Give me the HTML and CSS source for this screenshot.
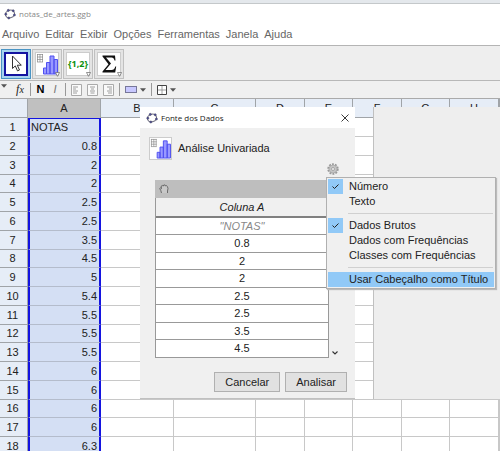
FILE: index.html
```html
<!DOCTYPE html>
<html lang="pt-BR">
<head>
<meta charset="utf-8">
<title>notas_de_artes.ggb</title>
<link rel="stylesheet" href="styles.css">
</head>
<body>
<svg class="defs" aria-hidden="true">
  <symbol id="logo" viewBox="0 0 12 12">
    <ellipse cx="6" cy="6" rx="4.6" ry="3.8" fill="none" stroke="#777788" stroke-width="1.1" transform="rotate(-20 6 6)"/>
    <g fill="#5050a0" stroke="#333344" stroke-width=".4"><circle cx="4.3" cy="2.4" r="1.1"/><circle cx="9.2" cy="2.8" r="1.1"/><circle cx="1.8" cy="6.2" r="1.1"/><circle cx="10.4" cy="7" r="1.1"/><circle cx="4.8" cy="10" r="1.1"/></g>
  </symbol>
  <symbol id="chart" viewBox="0 0 22 22">
    <path d="M1 1.500h6M1 4h6M1 6.500h6M1 9h6M1.500 1v8M4 1v8M6.500 1v8" stroke="#888888" stroke-width=".7" fill="none"/>
    <path d="M7.500 21v-6h3v6zM10.500 21V9.500h3.500V21zM14 21V3h4v18zM18 21V6.500h3.500V21z" fill="#9999ff" stroke="#5050f0" stroke-width="1"/>
  </symbol>
  <symbol id="corner" viewBox="0 0 5 5"><path d="M.5.5h4L2.500 4.300z" fill="#ffffff" stroke="#666666" stroke-width=".7"/></symbol>
  <symbol id="down" viewBox="0 0 6 4"><path d="M0 .3h6L3 3.700z" fill="#555555"/></symbol>
  <symbol id="check" viewBox="0 0 15 15"><path d="M4.500 7.500l2 2 4-4" fill="none" stroke="#222222" stroke-width="1"/></symbol>
</svg>

<div class="backdrop"></div>
<header class="titlebar"><svg class="logo"><use href="#logo"/></svg><span>notas_de_artes.ggb</span></header>
<nav class="menubar">
  <button>Arquivo</button><button>Editar</button><button>Exibir</button><button>Opções</button><button>Ferramentas</button><button>Janela</button><button>Ajuda</button>
</nav>
<div class="toolbar">
  <button class="tool active" aria-label="Mover"><svg viewBox="0 0 22 22"><path d="M7.500 3v12.500l2.800-2.600 2.200 5 2-.9-2.200-4.800h4z" fill="#ffffff" stroke="#333333" stroke-width="1"/></svg></button>
  <button class="tool" aria-label="Análise Univariada"><svg><use href="#chart"/></svg><svg class="corner"><use href="#corner"/></svg></button>
  <button class="tool list" aria-label="Lista"><span>{1,2}</span><svg class="corner"><use href="#corner"/></svg></button>
  <button class="tool" aria-label="Soma"><svg viewBox="0 0 22 22"><path d="M4.500 2.500h12.500l.5 5h-1q-.6-3-3-3H8l5 6-5.500 6.500h6q3 0 3.800-3.500h.9l-1 6H4.500v-1l6-7.200-6-7.800z" fill="#111111"/></svg><svg class="corner"><use href="#corner"/></svg></button>
</div>
<div class="stylebar">
  <svg class="down first"><use href="#down"/></svg>
  <button class="fx" aria-label="Fórmula"><i>f<small>x</small></i></button>
  <span class="sep"></span>
  <button class="bold">N</button>
  <button class="italic">I</button>
  <span class="sep"></span>
  <button aria-label="Alinhar à esquerda"><svg class="align" viewBox="0 0 11 12"><path d="M.5.5h10v11H.5z" fill="#fafafa" stroke="#aaaaaa"/><path d="M2 3h5M2 5h3M2 7h5M2 9h4" stroke="#888888" stroke-width=".8"/></svg></button>
  <button aria-label="Centralizar"><svg class="align" viewBox="0 0 11 12"><path d="M.5.5h10v11H.5z" fill="#fafafa" stroke="#aaaaaa"/><path d="M3 3h5M4 5h3M3 7h5M3.500 9h4" stroke="#888888" stroke-width=".8"/></svg></button>
  <button aria-label="Alinhar à direita"><svg class="align" viewBox="0 0 11 12"><path d="M.5.5h10v11H.5z" fill="#fafafa" stroke="#aaaaaa"/><path d="M4 3h5M6 5h3M4 7h5M5 9h4" stroke="#888888" stroke-width=".8"/></svg></button>
  <span class="sep"></span>
  <button class="pick" aria-label="Cor de fundo"><span class="swatch"></span><svg class="down"><use href="#down"/></svg></button>
  <span class="sep"></span>
  <button class="pick" aria-label="Bordas"><svg class="borders" viewBox="0 0 10 10"><path d="M.5.5h9v9h-9z" fill="#ffffff" stroke="#444444"/><path d="M5 1v8M1 5h8" stroke="#888888" stroke-width=".8"/></svg><svg class="down"><use href="#down"/></svg></button>
</div>

<main class="workspace">
  <table class="sheet">
    <colgroup><col class="c-num"><col class="c-a"><col class="c-b"><col class="c-c"><col class="c-s"><col class="c-d"><col class="c-s"><col class="c-d"><col class="c-s"><col></colgroup>
    <thead><tr><th></th><th class="sel">A</th><th>B</th><th>C</th><th>D</th><th>E</th><th>F</th><th>G</th><th>H</th><th></th></tr></thead>
    <tbody>
      <tr><th>1</th><td class="text">NOTAS</td><td></td><td></td><td></td><td></td><td></td><td></td><td></td><td></td></tr>
      <tr><th>2</th><td>0.8</td><td></td><td></td><td></td><td></td><td></td><td></td><td></td><td></td></tr>
      <tr><th>3</th><td>2</td><td></td><td></td><td></td><td></td><td></td><td></td><td></td><td></td></tr>
      <tr><th>4</th><td>2</td><td></td><td></td><td></td><td></td><td></td><td></td><td></td><td></td></tr>
      <tr><th>5</th><td>2.5</td><td></td><td></td><td></td><td></td><td></td><td></td><td></td><td></td></tr>
      <tr><th>6</th><td>2.5</td><td></td><td></td><td></td><td></td><td></td><td></td><td></td><td></td></tr>
      <tr><th>7</th><td>3.5</td><td></td><td></td><td></td><td></td><td></td><td></td><td></td><td></td></tr>
      <tr><th>8</th><td>4.5</td><td></td><td></td><td></td><td></td><td></td><td></td><td></td><td></td></tr>
      <tr><th>9</th><td>5</td><td></td><td></td><td></td><td></td><td></td><td></td><td></td><td></td></tr>
      <tr><th>10</th><td>5.4</td><td></td><td></td><td></td><td></td><td></td><td></td><td></td><td></td></tr>
      <tr><th>11</th><td>5.5</td><td></td><td></td><td></td><td></td><td></td><td></td><td></td><td></td></tr>
      <tr><th>12</th><td>5.5</td><td></td><td></td><td></td><td></td><td></td><td></td><td></td><td></td></tr>
      <tr><th>13</th><td>5.5</td><td></td><td></td><td></td><td></td><td></td><td></td><td></td><td></td></tr>
      <tr><th>14</th><td>6</td><td></td><td></td><td></td><td></td><td></td><td></td><td></td><td></td></tr>
      <tr><th>15</th><td>6</td><td></td><td></td><td></td><td></td><td></td><td></td><td></td><td></td></tr>
      <tr><th>16</th><td>6</td><td></td><td></td><td></td><td></td><td></td><td></td><td></td><td></td></tr>
      <tr><th>17</th><td>6</td><td></td><td></td><td></td><td></td><td></td><td></td><td></td><td></td></tr>
      <tr><th>18</th><td>6.3</td><td></td><td></td><td></td><td></td><td></td><td></td><td></td><td></td></tr>
    </tbody>
  </table>
  <div class="side"></div>

  <section class="dialog" role="dialog" aria-labelledby="dlg-title">
    <header class="dlg-bar"><svg class="logo"><use href="#logo"/></svg><span id="dlg-title">Fonte dos Dados</span>
      <button aria-label="Fechar"><svg viewBox="0 0 8 8"><path d="M.5.5l7 7M7.500.5l-7 7" stroke="#222222" stroke-width=".9"/></svg></button></header>
    <div class="dlg-head"><svg class="thumb"><use href="#chart"/></svg><span>Análise Univariada</span></div>
    <div class="options"><button aria-label="Opções"><svg viewBox="0 0 12 12"><circle cx="6" cy="6" r="4.800" fill="none" stroke="#999999" stroke-width="1.800" stroke-dasharray="1.900 1.100"/><circle cx="6" cy="6" r="4" fill="#c4c4c4" stroke="#a4a4a4" stroke-width=".7"/><circle cx="6" cy="6" r="1.500" fill="#eeeeee" stroke="#888888" stroke-width=".6"/></svg></button></div>
    <div class="source">
      <div class="grip"><svg viewBox="0 0 10 10"><path d="M2.500 9L1.800 6.500.7 4.500l1-.6.8.8-.3-2.500 1.200-.8.7.8.8-1.300 1.200.2.5.9 1-.4.8 1 .6 1.800L8.500 7v2" fill="#c8c8c8" stroke="#555555" stroke-width=".8"/></svg></div>
      <table class="data">
        <thead><tr><th>Coluna A</th></tr></thead>
        <tbody>
          <tr><td class="hint">"NOTAS"</td></tr><tr><td>0.8</td></tr><tr><td>2</td></tr><tr><td>2</td></tr><tr><td>2.5</td></tr><tr><td>2.5</td></tr><tr><td>3.5</td></tr><tr><td>4.5</td></tr>
        </tbody>
      </table>
      <svg class="scroll" viewBox="0 0 6 4"><path d="M.5.5L3 3 5.500.5" fill="none" stroke="#333333" stroke-width="1.100"/></svg>
    </div>
    <footer class="actions"><button>Cancelar</button><button>Analisar</button></footer>

    <ul class="popup" role="menu">
      <li><button role="menuitemcheckbox" aria-checked="true"><svg class="tick"><use href="#check"/></svg>Número</button></li>
      <li><button role="menuitemcheckbox" aria-checked="false">Texto</button></li>
      <li class="rule" role="separator"></li>
      <li><button role="menuitemradio" aria-checked="true"><svg class="tick"><use href="#check"/></svg>Dados Brutos</button></li>
      <li><button role="menuitemradio" aria-checked="false">Dados com Frequências</button></li>
      <li><button role="menuitemradio" aria-checked="false">Classes com Frequências</button></li>
      <li class="rule" role="separator"></li>
      <li><button class="hover" role="menuitem">Usar Cabeçalho como Título</button></li>
    </ul>
  </section>
</main>
</body>
</html>
```
FILE: styles.css
```css
* { box-sizing: border-box; }
html, body { height: 100%; }
body {
  margin: 0;
  display: flex;
  flex-direction: column;
  overflow: hidden;
  background: #ffffff;
  color: #222222;
  font: 11px/15px "Liberation Sans", Arial, sans-serif;
}
button {
  margin: 0;
  padding: 0;
  border: 0;
  background: none;
  color: inherit;
  font: inherit;
}
svg { display: block; }
.defs { position: absolute; width: 0; height: 0; }
.logo { width: 12px; height: 12px; }

.backdrop {
  flex: none;
  height: 4px;
  background: #e4e8ec;
  border-bottom: 1px solid #c4c8ca;
}
.titlebar {
  flex: none;
  display: flex;
  align-items: center;
  gap: 3px;
  height: 20px;
  padding: 0 4px;
  color: #888888;
  font: 8px/12px "Open Sans", "Noto Sans", sans-serif;
}
.menubar {
  flex: none;
  display: flex;
  align-items: center;
  gap: 6px;
  height: 22px;
  padding: 0 2px;
  border-bottom: 1px solid #b4b4b4;
  color: #666666;
}
.toolbar {
  flex: none;
  display: flex;
  align-items: center;
  gap: 1px;
  height: 35px;
  padding: 2px 1px 0;
  background: #eeeeee;
  border-bottom: 1px solid #b8b8b8;
}
.tool {
  position: relative;
  display: grid;
  place-items: center;
  width: 30px;
  height: 30px;
  border: 1px solid #c0c0c0;
  background: #ffffff;
  box-shadow: inset 0 0 0 2px #e4e4e4, inset 0 0 0 3px #cccccc;
}
.tool svg { width: 22px; height: 22px; }
.tool.active {
  border-color: #4a94c4;
  box-shadow: inset 0 0 0 2px #a8d4ee, inset 0 0 0 4px #1414a0;
}
.tool .corner { position: absolute; right: 1px; bottom: 1px; width: 5px; height: 5px; }
.list { color: #0a900a; font: bold 9px/12px "Open Sans", sans-serif; }

.stylebar {
  flex: none;
  display: flex;
  align-items: center;
  gap: 5px;
  height: 18px;
  padding: 0 3px;
  background: #f0f0f0;
  border-bottom: 1px solid #aaaaaa;
}
.down { width: 6px; height: 4px; }
.first { align-self: flex-start; margin: 3px 3px 0 -2px; }
.fx { width: 10px; font: 12px/15px "Liberation Serif", serif; }
.fx small { font-size: 10px; }
.sep { width: 1px; height: 13px; background: #999999; }
.bold { width: 9px; color: #000000; font-weight: bold; }
.italic { width: 10px; font-style: italic; color: #777777; }
.align { width: 11px; height: 12px; }
.pick { display: flex; align-items: center; gap: 3px; }
.swatch { width: 12px; height: 7px; border: 1px solid #777799; background: #c8c8ff; }
.borders { width: 10px; height: 10px; }

.workspace {
  flex: 1;
  min-height: 0;
  position: relative;
  overflow: hidden;
}
.sheet {
  width: 100%;
  table-layout: fixed;
  border-collapse: separate;
  border-spacing: 0;
}
.c-num { width: 28px; }
.c-a { width: 73px; }
.c-b { width: 73px; }
.c-c { width: 82px; }
.c-s { width: 49px; }
.c-d { width: 48px; }
.sheet th, .sheet td {
  height: inherit;
  padding: 0;
  border-right: 1px solid #c8c8c8;
  border-bottom: 1px solid #c8c8c8;
}
.sheet th {
  background: #e6edf7;
  border-color: #a0a4a8;
  font-weight: normal;
  text-align: center;
}
.sheet tr { height: 19px; }
.sheet tbody tr:nth-child(4n) { height: 18px; }
.sheet thead .sel { background: #c0c0c0; border-bottom: 0; }
.sheet tbody th { padding-right: 2px; }
.sheet td:nth-child(2) {
  padding-right: 2px;
  border-left: 2px solid #1414e0;
  border-right: 2px solid #1414e0;
  border-bottom-color: #b4bccc;
  background: #d4dff4;
  text-align: right;
}
.sheet tr:first-child td:nth-child(2) { border-top: 1px solid #1414e0; }
.sheet td.text { padding-left: 1px; text-align: left; }

.side {
  position: absolute;
  top: 8px;
  left: 373px;
  right: 0;
  height: 292px;
  border-left: 1px solid #c0c0c0;
  background: #eeeeee;
}
.dialog {
  position: absolute;
  top: 8px;
  left: 140px;
  width: 215px;
  border-bottom: 1px solid #c0c0c0;
  background: #f0f0f0;
}
.dlg-bar {
  display: flex;
  align-items: center;
  gap: 3px;
  height: 21px;
  padding: 0 6px;
  background: #ffffff;
  font: 8px/12px "Open Sans", "Noto Sans", sans-serif;
}
.dlg-bar button { margin-left: auto; }
.dlg-bar button svg { width: 8px; height: 8px; }
.dlg-head { display: flex; align-items: center; gap: 6px; padding: 9px 9px 0; }
.thumb { width: 23px; height: 23px; border: 1px solid #cccccc; background: #ffffff; }
.options { display: flex; justify-content: flex-end; padding: 3px 16px 5px; }
.options svg { width: 12px; height: 12px; }
.source {
  display: grid;
  grid-template-columns: 174px 12px;
  align-items: end;
  padding-left: 15px;
}
.grip {
  grid-column: 1 / 3;
  display: flex;
  align-items: center;
  height: 18px;
  padding-left: 4px;
  background: #bebebe;
}
.grip svg { width: 10px; height: 10px; }
.data {
  width: 100%;
  border-collapse: separate;
  border-spacing: 0;
  border-left: 1px solid #999999;
  border-right: 1px solid #999999;
}
.data th, .data td {
  padding: 0;
  border-bottom: 1px solid #999999;
  text-align: center;
}
.data th { height: 20px; border-bottom: 2px solid #808080; font-weight: normal; font-style: italic; }
.data tr { height: 17px; }
.data tbody tr:nth-child(even) { height: 18px; }
.data td { background: #ffffff; }
.data .hint { color: #888888; font-style: italic; }
.scroll { width: 6px; height: 4px; margin: 0 0 3px 3px; }
.actions { display: flex; justify-content: flex-end; gap: 5px; padding: 14px 8px 6px; }
.actions button {
  height: 20px;
  padding: 0 10px;
  border: 1px solid #b0b0b0;
  background: #e1e1e1;
}
.popup {
  position: absolute;
  top: 70px;
  left: 186px;
  width: 170px;
  margin: 0;
  padding: 1px;
  border: 1px solid #b0b0b0;
  background: #f0f0f0;
  box-shadow: 1px 1px 1px #bbbbbb;
  list-style: none;
}
.popup button {
  position: relative;
  display: block;
  width: 100%;
  height: 15px;
  padding-left: 21px;
  text-align: left;
  white-space: nowrap;
}
.popup .hover { background: #91c9f7; }
.tick { position: absolute; top: 0; left: 0; width: 15px; height: 15px; background: #91c9f7; }
.rule { height: 1px; margin: 4px 1px 4px 20px; background: #d0d0d0; }
```
